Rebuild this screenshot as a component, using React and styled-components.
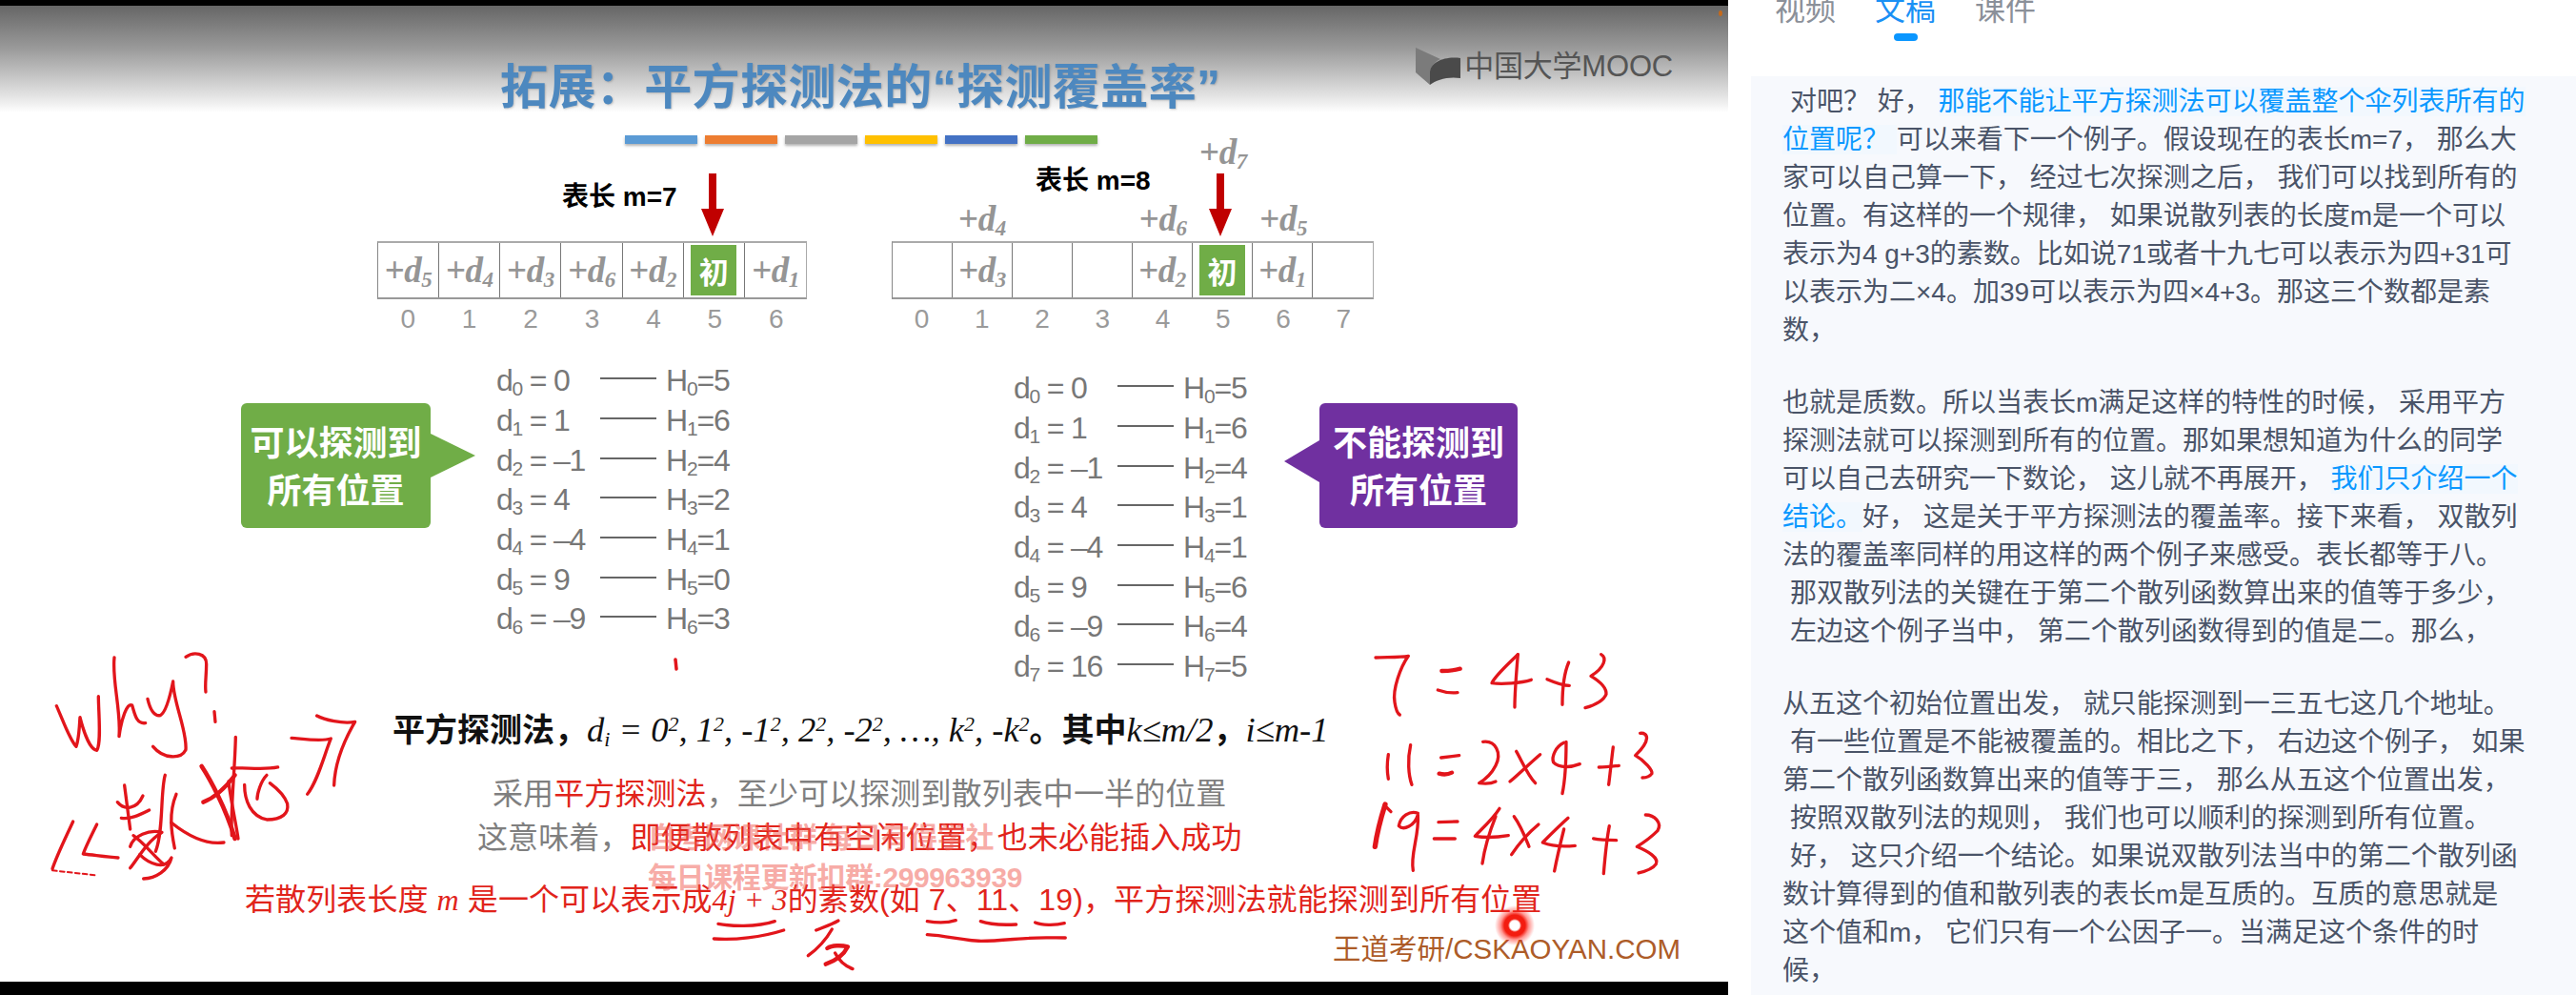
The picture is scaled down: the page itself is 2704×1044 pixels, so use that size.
import React from 'react'
import styled, { createGlobalStyle } from 'styled-components'

const CJK = '"Noto Sans CJK SC", "Noto Sans", sans-serif'
const LATIN_CJK = '"Liberation Sans", "Noto Sans CJK SC", sans-serif'
const SERIF = '"Liberation Serif", "Noto Sans CJK SC", serif'

const Global = createGlobalStyle`
    html, body {
        margin: 0;
        padding: 0;
        background: #fff;
        overflow: hidden;
    }
`

const Page = styled.div`
    display: flex;
    width: 2704px;
    height: 1044px;
    overflow: hidden;
`

const Slide = styled.div`
    position: relative;
    display: flex;
    flex-direction: column;
    width: 1814px;
    height: 1044px;
    flex-shrink: 0;
    background: #fff;
`

const BlackBar = styled.div`
    height: ${p => p.$h}px;
    background: #000;
    flex-shrink: 0;
    margin-top: ${p => (p.$bottom ? 'auto' : '0')};
`

const Header = styled.div`
    display: flex;
    align-items: flex-start;
    height: 112px;
    padding-left: 525px;
    background: linear-gradient(#666 0%, #9a9a9a 40%, #e4e4e4 85%, #fff 100%);
`

const Title = styled.h1`
    margin: 50px 0 0;
    font: bold 50px/62px ${CJK};
    letter-spacing: 0.4px;
    color: #4d88bf;
    white-space: pre;
    text-shadow: 1px 1px 2px rgba(60, 60, 60, 0.25);

    span {
        font-family: "Liberation Sans", sans-serif;
    }
`

const Logo = styled.div`
    display: flex;
    align-items: center;
    margin: 44px 58px 0 auto;
    gap: 3px;
`

const LogoName = styled.span`
    font: 31px/38px ${LATIN_CJK};
    letter-spacing: -0.2px;
    color: #555;
`

const SpeckDot = styled.i`
    position: absolute;
    right: 6px;
    top: 11px;
    width: 4px;
    height: 6px;
    border-radius: 50%;
    background: #c46a1d;
`

const Stripes = styled.div`
    display: flex;
    gap: 8px;
    margin: 24px 0 0 656px;
`

const Stripe = styled.div`
    width: 76px;
    height: 9px;
    background: ${p => p.$color};
    box-shadow: 0 2px 3px rgba(0, 0, 0, 0.3);
`

const Diagrams = styled.div`
    display: flex;
    gap: 89px;
    padding-left: 396px;
`

const Diagram = styled.div`
    width: ${p => p.$w}px;
`

const Head = styled.div`
    display: grid;
    grid-template-columns: repeat(${p => p.$n}, 1fr);
    grid-template-rows: 1fr;
    height: 102px;
`

const Overhead = styled.div`
    grid-row: 1;
    grid-column: ${p => p.$col};
    justify-self: center;
    align-self: ${p => (p.$top ? 'start' : 'end')};
    margin: ${p => (p.$top ? '-11px 0 0' : '0 0 3px')};
`

const LengthLabel = styled.div`
    grid-row: 1;
    grid-column: 1 / -1;
    align-self: start;
    margin: ${p => p.$top}px 0 0 ${p => p.$left}px;
    font: bold 28px/36px ${LATIN_CJK};
    color: #000;
`

const ArrowBox = styled.svg`
    grid-row: 1;
    grid-column: ${p => p.$col};
    justify-self: center;
    align-self: end;
    margin: 0 5px 5px 0;
    width: 24px;
    height: 66px;
`

const Table = styled.div`
    display: grid;
    grid-template-columns: repeat(${p => p.$n}, 1fr);
    height: 61px;
    box-sizing: border-box;
    border-top: 2px solid #aaa;
    border-bottom: 2px solid #999;
    border-left: 1px solid #888;
    border-right: 1px solid #aaa;
`

const Cell = styled.div`
    display: flex;
    align-items: center;
    justify-content: center;
    padding: 1px;
    min-width: 0;
    border-right: ${p => (p.$last ? 'none' : '1px solid #777')};
`

const Start = styled.div`
    display: flex;
    align-items: center;
    justify-content: center;
    width: 48px;
    height: 53px;
    background: #70ad47;
    color: #fff;
    font: bold 31px/1 ${CJK};
`

const ProbeText = styled.span`
    font: italic bold 37px/40px ${SERIF};
    letter-spacing: -0.5px;
    color: #959595;
    white-space: nowrap;

    b {
        font-style: normal;
    }

    sub {
        font-size: 23px;
        line-height: 0;
        vertical-align: -5px;
    }
`

const Indexes = styled.div`
    display: grid;
    grid-template-columns: repeat(${p => p.$n}, 1fr);
    height: 42px;
    font: 28px/42px "Liberation Sans", sans-serif;
    color: #9a9a9a;
    text-align: center;
`

const Middle = styled.div`
    display: flex;
    align-items: flex-start;
    height: 386px;
    padding-left: 253px;
`

const Callout = styled.div`
    position: relative;
    box-sizing: border-box;
    width: ${p => p.$w}px;
    height: 131px;
    margin: 67px 0 0 ${p => p.$ml}px;
    padding-top: 14px;
    border-radius: 6px;
    background: ${p => p.$color};
    color: #fff;
    font: bold 36px/50px ${CJK};
    text-align: center;

    &::after {
        content: '';
        position: absolute;
        top: ${p => p.$tipTop}px;
        ${p => (p.$right ? 'right: 100%' : 'left: 100%')};
        border-top: ${p => p.$tipH}px solid transparent;
        border-bottom: ${p => p.$tipH}px solid transparent;
        ${p => (p.$right ? 'border-right' : 'border-left')}: ${p => p.$tipW}px solid ${p => p.$color};
    }
`

const EqList = styled.div`
    width: 245px;
    margin: ${p => p.$top}px 0 0 ${p => p.$left}px;
`

const EqRow = styled.div`
    display: grid;
    grid-template-columns: 109px 59px auto;
    align-items: center;
    height: 41.7px;
    font: 32px/41px "Liberation Sans", sans-serif;
    letter-spacing: -1.2px;
    color: #777;
    white-space: pre;

    sub {
        font-size: 21px;
        line-height: 0;
        vertical-align: -5px;
    }
`

const EqLink = styled.i`
    display: block;
    height: 2px;
    margin-top: -5px;
    background: #666;
`

const EqRight = styled.span`
    padding-left: 10px;
`

const Formula = styled.div`
    height: 44px;
    padding-left: 412px;
    font: bold 34px/44px ${CJK};
    color: #111;
    white-space: pre;

    em {
        font: italic 36.5px/44px ${SERIF};
        color: #111;
    }

    sup {
        font-size: 22px;
        line-height: 0;
        vertical-align: 11px;
    }

    sub {
        font-size: 22px;
        line-height: 0;
        vertical-align: -5px;
    }
`

const Note = styled.div`
    height: 46px;
    margin-top: ${p => p.$mt || 0}px;
    padding-left: ${p => p.$left}px;
    font: 32px/46px ${LATIN_CJK};
    letter-spacing: 0.1px;
    color: ${p => p.$color || '#7f7f7f'};
    white-space: pre;

    strong {
        font-weight: normal;
        color: #e1241b;
    }

    em {
        font-family: ${SERIF};
    }
`

const Brand = styled.div`
    margin: 9px 50px 0 auto;
    font: 29.5px/40px ${LATIN_CJK};
    color: #ad5c28;
`

const Watermark = styled.div`
    position: absolute;
    left: 680px;
    top: 858px;
    font: bold 30px/42px ${LATIN_CJK};
    letter-spacing: -0.4px;
    color: rgba(240, 90, 80, 0.5);
    white-space: pre;
`

const Laser = styled.div`
    position: absolute;
    left: 1568px;
    top: 949px;
    width: 44px;
    height: 44px;
    border-radius: 50%;
    background: radial-gradient(circle, #fff 0 5px, #f31c10 7px 11px, rgba(255, 30, 20, 0.45) 15px, rgba(255, 30, 20, 0) 21px);
`

const InkLayer = styled.svg`
    position: absolute;
    left: 0;
    top: 0;
    width: 1814px;
    height: 1044px;
    pointer-events: none;
    fill: none;
    stroke: #e2151b;
    stroke-width: 10;
    stroke-linecap: round;
    stroke-linejoin: round;
`

const Side = styled.div`
    flex: 1;
    display: flex;
    flex-direction: column;
    padding-left: 24px;
    min-width: 0;
    background: #fff;
`

const TabRow = styled.div`
    display: flex;
    gap: 41px;
    margin-top: -15px;
    padding-left: 25px;
`

const Tab = styled.div`
    display: flex;
    flex-direction: column;
    align-items: center;
    font: 32px/44px ${CJK};
    color: ${p => (p.$active ? '#1a90f5' : '#8b9099')};

    &::after {
        content: '';
        width: 25px;
        height: 8px;
        margin-top: 6px;
        border-radius: 4px;
        background: ${p => (p.$active ? '#0a96ff' : 'transparent')};
    }
`

const Panel = styled.div`
    flex: 1;
    margin-top: 37px;
    padding: 7px 0 0 33px;
    background: #f7f9fd;
`

const Paragraph = styled.div`
    margin-bottom: 36px;
`

const Line = styled.div`
    height: 40px;
    padding-left: ${p => (p.$indent ? 8 : 0)}px;
    font: 28px/40px ${LATIN_CJK};
    color: #4a5468;
    white-space: pre;
`

const Hot = styled.span`
    color: #0b98ff;
    background: #f2f8fe;
`

const Probe = ({ n }) => (
    <ProbeText><b>+</b>d<sub>{n}</sub></ProbeText>
)

const DownArrow = ({ col }) => (
    <ArrowBox $col={col} viewBox="0 0 24 66">
        <path d="M8 0H16V37H24L12 66L0 37H8Z" fill="#c00000" />
    </ArrowBox>
)

const LogoMark = () => (
    <svg width="48" height="40" viewBox="0 0 48 40">
        <path d="M0 0L26 12C18 16 15 22 15 28V39L0 26Z" fill="#7b7b7b" />
        <path d="M15 27C15 14 32 9 47 11V32C33 30 22 34 15 39Z" fill="#4a4a4a" />
    </svg>
)

const stripeColors = ['#5b9bd5', '#ed7d31', '#a5a5a5', '#ffc000', '#4472c4', '#70ad47']

const diagramA = [5, 4, 3, 6, 2, 'start', 1]
const diagramB = [null, 3, null, null, 2, 'start', 1, null]

const eqA = [
    ['0', ' = 0', '0', '=5'],
    ['1', ' = 1', '1', '=6'],
    ['2', ' = –1', '2', '=4'],
    ['3', ' = 4', '3', '=2'],
    ['4', ' = –4', '4', '=1'],
    ['5', ' = 9', '5', '=0'],
    ['6', ' = –9', '6', '=3'],
]

const eqB = [
    ['0', ' = 0', '0', '=5'],
    ['1', ' = 1', '1', '=6'],
    ['2', ' = –1', '2', '=4'],
    ['3', ' = 4', '3', '=1'],
    ['4', ' = –4', '4', '=1'],
    ['5', ' = 9', '5', '=6'],
    ['6', ' = –9', '6', '=4'],
    ['7', ' = 16', '7', '=5'],
]

// fullwidth punctuation used by the transcript and the slide text
const COMMA = '\uFF0C'
const ASK = '\uFF1F'
const COLON = '\uFF1A'

const transcript = [
    [
        { indent: true, text: `对吧${ASK} 好${COMMA} `, hot: '那能不能让平方探测法可以覆盖整个伞列表所有的' },
        { hot: `位置呢${ASK} `, after: `可以来看下一个例子。假设现在的表长m=7${COMMA} 那么大` },
        { text: `家可以自己算一下${COMMA} 经过七次探测之后${COMMA} 我们可以找到所有的` },
        { text: `位置。有这样的一个规律${COMMA} 如果说散列表的长度m是一个可以` },
        { text: '表示为4 g+3的素数。比如说71或者十九七可以表示为四+31可' },
        { text: '以表示为二×4。加39可以表示为四×4+3。那这三个数都是素' },
        { text: `数${COMMA}` },
    ],
    [
        { text: `也就是质数。所以当表长m满足这样的特性的时候${COMMA} 采用平方` },
        { text: '探测法就可以探测到所有的位置。那如果想知道为什么的同学' },
        { text: `可以自己去研究一下数论${COMMA} 这儿就不再展开${COMMA} `, hot: '我们只介绍一个' },
        { hot: '结论。', after: `好${COMMA} 这是关于平方探测法的覆盖率。接下来看${COMMA} 双散列` },
        { text: '法的覆盖率同样的用这样的两个例子来感受。表长都等于八。' },
        { indent: true, text: `那双散列法的关键在于第二个散列函数算出来的值等于多少${COMMA}` },
        { indent: true, text: `左边这个例子当中${COMMA} 第二个散列函数得到的值是二。那么${COMMA}` },
    ],
    [
        { text: `从五这个初始位置出发${COMMA} 就只能探测到一三五七这几个地址。` },
        { indent: true, text: `有一些位置是不能被覆盖的。相比之下${COMMA} 右边这个例子${COMMA} 如果` },
        { text: `第二个散列函数算出来的值等于三${COMMA} 那么从五这个位置出发${COMMA}` },
        { indent: true, text: `按照双散列法的规则${COMMA} 我们也可以顺利的探测到所有位置。` },
        { indent: true, text: `好${COMMA} 这只介绍一个结论。如果说双散列法当中的第二个散列函` },
        { text: '数计算得到的值和散列表的表长m是互质的。互质的意思就是' },
        { text: `这个值和m${COMMA} 它们只有一个公因子一。当满足这个条件的时` },
        { text: `候${COMMA}` },
    ],
]

const HashDiagram = ({ cells, width, label, labelTop, labelLeft, overhead }) => (
    <Diagram $w={width}>
        <Head $n={cells.length}>
            <LengthLabel $top={labelTop} $left={labelLeft}>{label}</LengthLabel>
            <DownArrow col={6} />
            {overhead.map(item => (
                <Overhead key={item.n} $col={item.col} $top={item.top}>
                    <Probe n={item.n} />
                </Overhead>
            ))}
        </Head>
        <Table $n={cells.length}>
            {cells.map((cell, i) => (
                <Cell key={i} $last={i === cells.length - 1}>
                    {cell === 'start' ? <Start>初</Start> : cell !== null && <Probe n={cell} />}
                </Cell>
            ))}
        </Table>
        <Indexes $n={cells.length}>
            {cells.map((_, i) => <span key={i}>{i}</span>)}
        </Indexes>
    </Diagram>
)

const Equations = ({ rows, left, top }) => (
    <EqList $left={left} $top={top}>
        {rows.map(r => (
            <EqRow key={r[0]}>
                <span>d<sub>{r[0]}</sub>{r[1]}</span>
                <EqLink />
                <EqRight>H<sub>{r[2]}</sub>{r[3]}</EqRight>
            </EqRow>
        ))}
    </EqList>
)

const Handwriting = () => (
    <InkLayer viewBox="0 0 1814 1044">
        <g transform="translate(40 680) scale(0.3333)">
            <path d="M58 182C75 220 100 290 120 310C130 280 130 240 132 218C145 270 165 320 185 322C200 300 190 200 190 152" />
            <path d="M240 30C232 100 262 200 255 278C262 225 280 170 296 180C305 210 310 240 338 236" />
            <path d="M345 160C352 190 365 215 385 212C405 200 418 140 425 105C425 170 470 260 465 320C450 350 395 350 362 310" />
            <path d="M465 28C490 10 530 15 530 50C530 90 525 110 528 138" />
            <path d="M555 200L558 232" />
            <path d="M110 546C90 590 60 650 45 695" />
            <path d="M45 700L180 715" strokeDasharray="14 10" strokeWidth="6" />
            <path d="M185 555C170 585 150 625 142 648C180 652 220 658 252 660" />
            <path d="M272 432L290 570" />
            <path d="M250 485C270 510 310 510 330 465" />
            <path d="M262 535C290 540 320 525 350 510" />
            <path d="M300 590C330 610 370 660 395 680" />
            <path d="M400 400C385 450 395 580 370 640" />
            <path d="M435 460C410 520 420 580 430 630" />
            <path d="M420 550C470 590 530 620 585 612" />
            <path d="M290 625C300 590 350 570 390 580C340 610 310 670 290 692" />
            <path d="M320 650C350 680 400 700 420 660C410 700 370 725 332 726" />
            <path d="M515 372C540 410 590 500 620 600" strokeWidth="14" />
            <path d="M622 280C620 380 605 520 610 590" />
            <path d="M520 485C560 470 590 440 620 400" strokeWidth="13" />
            <path d="M610 378C650 375 710 385 755 375" />
            <path d="M720 400C700 420 690 460 690 475" />
            <path d="M650 430C650 480 670 530 720 540C770 540 790 520 785 490C775 460 750 440 730 425" />
            <path d="M600 420C605 470 625 560 630 600" />
            <path d="M798 283C830 285 890 295 922 285C900 340 880 420 848 460" />
            <path d="M878 213C900 225 960 240 998 232C970 280 935 350 932 432" />
        </g>
        <g transform="translate(1420 680) scale(0.3333)">
            <path d="M72 30C100 28 150 30 175 25C150 60 125 130 132 170C135 190 140 205 148 210" />
            <path d="M280 72C300 72 320 70 338 65" strokeWidth="13" />
            <path d="M268 132C290 140 310 142 330 140" />
            <path d="M520 20C490 50 450 85 438 110C470 115 530 110 562 100" />
            <path d="M520 20C515 80 510 140 510 186" />
            <path d="M612 98C640 110 660 118 682 118" />
            <path d="M680 45C665 80 660 130 660 178" />
            <path d="M782 20C800 30 795 60 750 88C770 100 800 120 798 145C790 165 760 180 732 188" />
            <path d="M112 335C108 360 108 390 112 412" />
            <path d="M182 305C172 350 175 400 186 430" />
            <path d="M278 345L335 338" />
            <path d="M272 395C290 400 300 398 312 392" strokeWidth="13" />
            <path d="M410 295C450 290 470 330 450 370C435 400 415 415 398 425C420 428 440 425 450 420" />
            <path d="M515 325C530 350 550 400 575 425" />
            <path d="M590 335C560 360 520 400 495 420" />
            <path d="M665 298C640 310 625 340 632 360C650 380 690 375 715 365" />
            <path d="M672 295C672 350 670 410 660 458" />
            <path d="M775 375C800 375 820 372 838 370" />
            <path d="M820 312C815 350 810 400 806 430" />
            <path d="M905 268C930 265 940 290 890 338C920 355 945 385 942 395C935 405 925 408 912 408" />
            <path d="M102 492C90 530 75 590 70 625" strokeWidth="16" />
            <path d="M100 495L120 515" />
            <path d="M205 520C180 510 150 530 145 560C160 575 195 560 205 525C210 590 180 650 190 700" />
            <path d="M270 548L330 546" />
            <path d="M256 600L322 600" />
            <path d="M462 505C440 540 400 575 385 592C420 598 460 595 490 590" />
            <path d="M450 530C430 580 415 630 408 678" />
            <path d="M508 530C530 560 545 600 555 625" />
            <path d="M585 555C555 580 520 620 500 650" />
            <path d="M678 535C650 560 620 590 598 612C630 625 670 625 700 622" />
            <path d="M665 570C655 610 645 650 635 702" />
            <path d="M758 600C780 605 810 605 830 605" />
            <path d="M808 560C800 600 795 650 790 710" />
            <path d="M922 525C950 525 975 550 960 575C945 590 920 610 895 625C930 640 965 660 955 680C945 695 925 702 900 708" />
        </g>
        <g transform="translate(660 850) scale(0.3333)">
            <path d="M282 358C320 365 400 370 460 350" />
            <path d="M268 405C330 410 420 400 488 378" />
            <path d="M660 348C640 360 610 370 590 378" />
            <path d="M640 375C620 410 590 440 565 458" />
            <path d="M625 435C640 425 670 425 690 430C675 460 650 475 620 485" strokeWidth="13" />
            <path d="M650 450C660 470 680 490 705 500" />
            <path d="M940 350C970 355 1005 355 1030 347" />
            <path d="M1108 350C1140 362 1180 362 1220 360" />
            <path d="M1280 354C1300 362 1340 364 1372 356" />
            <path d="M940 392C1000 395 1060 412 1110 412C1160 412 1220 405 1260 403C1300 400 1340 402 1375 402" />
        </g>
        <path d="M709 692L710 702" strokeWidth="3.5" />
    </InkLayer>
)

export default function App() {
    return (
        <Page>
            <Global />
            <Slide>
                <BlackBar $h={6} />
                <Header>
                    <Title>拓展{COLON}平方探测法的<span>“</span>探测覆盖率<span>”</span></Title>
                    <Logo>
                        <LogoMark />
                        <LogoName>中国大学MOOC</LogoName>
                    </Logo>
                </Header>
                <SpeckDot />
                <Stripes>
                    {stripeColors.map(c => <Stripe key={c} $color={c} />)}
                </Stripes>
                <Diagrams>
                    <HashDiagram
                        cells={diagramA}
                        width={451}
                        label="表长 m=7"
                        labelTop={38}
                        labelLeft={194}
                        overhead={[]}
                    />
                    <HashDiagram
                        cells={diagramB}
                        width={506}
                        label="表长 m=8"
                        labelTop={21}
                        labelLeft={151}
                        overhead={[
                            { n: 4, col: 2 },
                            { n: 6, col: 5 },
                            { n: 5, col: 7 },
                            { n: 7, col: 6, top: true },
                        ]}
                    />
                </Diagrams>
                <Middle>
                    <Callout $w={199} $ml={0} $color="#70ad47" $tipTop={32} $tipH={23.5} $tipW={47}>
                        可以探测到<br />所有位置
                    </Callout>
                    <Equations rows={eqA} left={69} top={23} />
                    <Equations rows={eqB} left={298} top={31} />
                    <Callout $w={208} $ml={76} $right $color="#7030a0" $tipTop={39} $tipH={22.5} $tipW={37}>
                        不能探测到<br />所有位置
                    </Callout>
                </Middle>
                <Formula>
                    平方探测法{COMMA}<em>d<sub>i</sub> = 0<sup>2</sup>, 1<sup>2</sup>, -1<sup>2</sup>, 2<sup>2</sup>, -2<sup>2</sup>, …, k<sup>2</sup>, -k<sup>2</sup></em>。其中<em>k≤m/2</em>{COMMA}<em>i≤m-1</em>
                </Formula>
                <Note $left={517} $mt={24}>采用<strong>平方探测法</strong>{COMMA}至少可以探测到散列表中一半的位置</Note>
                <Note $left={501}>这意味着{COMMA}<strong>即便散列表中有空闲位置{COMMA}也未必能插入成功</strong></Note>
                <Note $left={257} $mt={19} $color="#e1241b">若散列表长度 <em><i>m</i></em> 是一个可以表示成<em><i>4j + 3</i></em>的素数(如 7、11、19){COMMA}平方探测法就能探测到所有位置</Note>
                <Brand>王道考研/CSKAOYAN.COM</Brand>
                <BlackBar $h={14} $bottom />
                <Watermark>自考网课社群 每日有得学社{'\n'}每日课程更新扣群:299963939</Watermark>
                <Handwriting />
                <Laser />
            </Slide>
            <Side>
                <TabRow>
                    <Tab>视频</Tab>
                    <Tab $active>文稿</Tab>
                    <Tab>课件</Tab>
                </TabRow>
                <Panel>
                    {transcript.map((para, i) => (
                        <Paragraph key={i}>
                            {para.map((line, j) => (
                                <Line key={j} $indent={line.indent}>
                                    {line.text}
                                    {line.hot && <Hot>{line.hot}</Hot>}
                                    {line.after}
                                </Line>
                            ))}
                        </Paragraph>
                    ))}
                </Panel>
            </Side>
        </Page>
    )
}
